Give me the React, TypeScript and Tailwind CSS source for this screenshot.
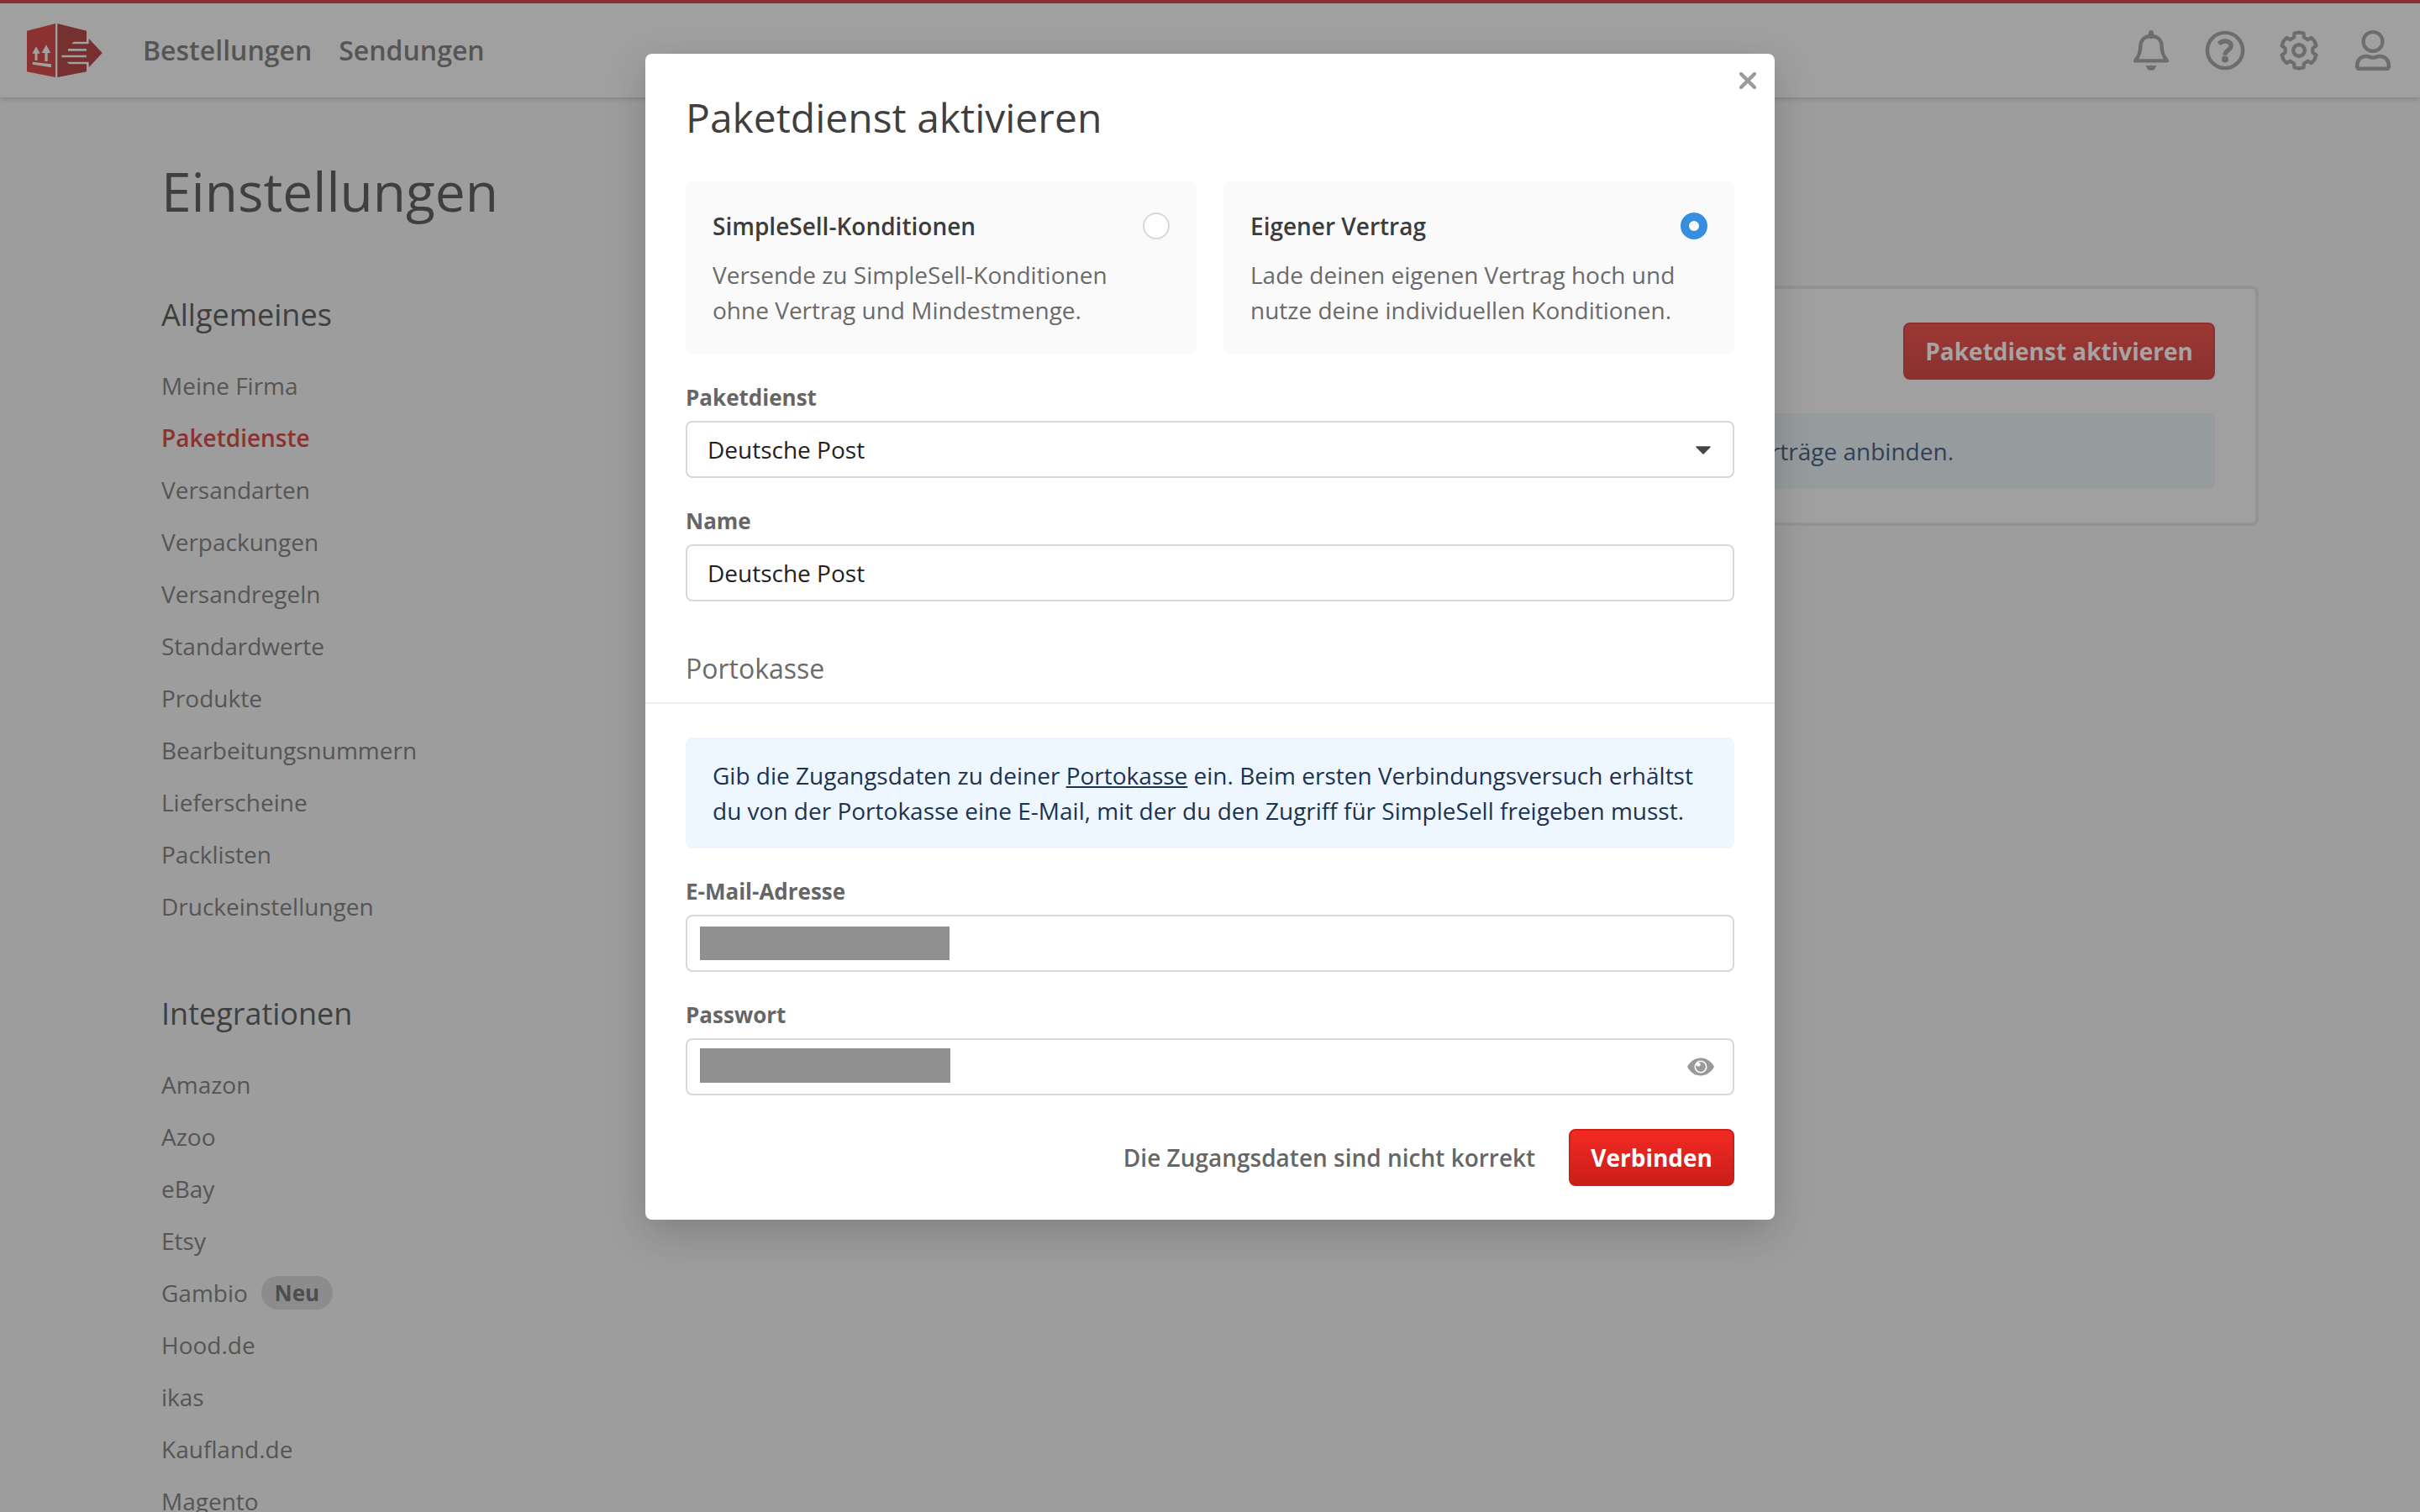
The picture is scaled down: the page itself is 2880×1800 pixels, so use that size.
import React, { useState } from "react";

const GENERAL_LINKS = [
  "Meine Firma",
  "Paketdienste",
  "Versandarten",
  "Verpackungen",
  "Versandregeln",
  "Standardwerte",
  "Produkte",
  "Bearbeitungsnummern",
  "Lieferscheine",
  "Packlisten",
  "Druckeinstellungen",
];

const INTEGRATION_LINKS = [
  "Amazon",
  "Azoo",
  "eBay",
  "Etsy",
  "Gambio",
  "Hood.de",
  "ikas",
  "Kaufland.de",
  "Magento",
];

const Logo = () => (
  <svg width="90" height="64" viewBox="0 0 90 64">
    <path d="M0 8.7 34 0V64L0 57.3Z" fill="#8b3131" />
    <path d="M36.3 0 71 8.7V57.3L36.3 64Z" fill="#76302f" />
    <path
      d="M55.7 21.7H71V24.3H53ZM49 30H71V32.7H49ZM41.3 37.7H71V40.3H41.3ZM47.3 45.7H71V48.3H50.3Z"
      fill="#a0a0a0"
    />
    <path d="M70.9 24.3H73.7V18L89.7 35 73.7 52.3V45.7H70.9Z" fill="#76302f" />
    <path
      d="M11 27.3 15.7 35.7H12.5V44H9.5V35.7H6.3ZM23 25.3 28.3 35H24.7V45H21.3V35H17.5ZM6.7 45.7 29 48.3V52.3L6.7 48.7Z"
      fill="#a0a0a0"
    />
  </svg>
);

const BellIcon = () => (
  <svg width="48" height="48" viewBox="0 0 48 48" fill="none">
    <path
      d="M5 36.4C9 31.5 11.3 26.5 11.3 19.5C11.3 11.8 16.3 7 24 7S36.7 11.8 36.7 19.5C36.7 26.5 39 31.5 43 36.4Z"
      stroke="#6d6d6d"
      strokeWidth="4.4"
      strokeLinejoin="round"
    />
    <path d="M24 3V7" stroke="#6d6d6d" strokeWidth="6" strokeLinecap="round" />
    <path d="M18 42H30A6 6 0 0 1 18 42Z" fill="#6d6d6d" />
  </svg>
);

const HelpIcon = () => (
  <svg width="48" height="48" viewBox="0 0 48 48" fill="none">
    <circle cx="24" cy="24" r="21.1" stroke="#6d6d6d" strokeWidth="4.4" />
    <path
      d="M16.8 16.2C18.8 14 21 13 24 13C28 13 31.2 15 31.2 18.6C31.2 23.6 24 23.2 24 29.8"
      stroke="#6d6d6d"
      strokeWidth="5.4"
    />
    <circle cx="24" cy="34.4" r="4" fill="#6d6d6d" />
  </svg>
);

// outline of the gear: five points for each of the six teeth
const gearPoints = [0, 60, 120, 180, 240, 300]
  .flatMap((tooth) =>
    [
      [-21, 16.6],
      [-15, 21.2],
      [0, 21.4],
      [15, 21.2],
      [21, 16.6],
    ].map(([offset, radius]) => {
      const angle = ((tooth + offset) * Math.PI) / 180;
      return `${24 + radius * Math.sin(angle)},${24 - radius * Math.cos(angle)}`;
    })
  )
  .join(" ");

const GearIcon = () => (
  <svg width="48" height="48" viewBox="0 0 48 48" fill="none">
    <polygon
      points={gearPoints}
      stroke="#6d6d6d"
      strokeWidth="4.2"
      strokeLinejoin="round"
    />
    <circle cx="24" cy="24" r="6.8" stroke="#6d6d6d" strokeWidth="4.4" />
  </svg>
);

const UserIcon = () => (
  <svg width="48" height="48" viewBox="0 0 48 48" fill="none">
    <circle cx="24" cy="13.4" r="11.4" stroke="#6d6d6d" strokeWidth="4.2" />
    <path
      d="M5.2 42C5.2 35.4 9.6 31 16 31C19.2 31 21 32.6 24 32.6S28.8 31 32 31C38.4 31 42.8 35.4 42.8 42V43.8A2 2 0 0 1 40.8 45.8H7.2A2 2 0 0 1 5.2 43.8Z"
      stroke="#6d6d6d"
      strokeWidth="4.4"
    />
  </svg>
);

const EyeIcon = () => (
  <svg width="32" height="22" viewBox="0 0 32 22">
    <path
      d="M0 11C3.5 4.5 9.3 .5 16 .5S28.5 4.5 32 11C28.5 17.5 22.7 21.5 16 21.5S3.5 17.5 0 11Z"
      fill="#999"
    />
    <circle cx="16" cy="11" r="6.7" fill="#999" stroke="#fff" strokeWidth="1.6" />
    <circle cx="13.3" cy="8.3" r="2.4" fill="#fff" />
  </svg>
);

interface NavSectionProps {
  title: string;
  links: string[];
}

const NavSection: React.FC<NavSectionProps> = ({ title, links }) => (
  <section>
    <h2 className="text-[36px] leading-[45px] text-[#3f3f3f] mb-[41px]">
      {title}
    </h2>
    <ul className="flex flex-col gap-5">
      {links.map((link) => (
        <li
          key={link}
          className={
            link === "Paketdienste"
              ? "font-semibold text-[#8d3130]"
              : "flex items-center gap-4 text-[#555]"
          }
        >
          {link}
          {link === "Gambio" && (
            <span className="h-10 w-[85px] rounded-full bg-[#8c8c8c] text-center text-[26px] leading-10 font-bold text-[#4e4e4e]">
              Neu
            </span>
          )}
        </li>
      ))}
    </ul>
  </section>
);

interface ContractOptionProps {
  title: string;
  lines: string[];
  checked: boolean;
  onSelect: () => void;
}

const ContractOption: React.FC<ContractOptionProps> = ({
  title,
  lines,
  checked,
  onSelect,
}) => (
  <div onClick={onSelect} className="flex-1 rounded-lg bg-[#fafafa] p-8">
    <div className="flex items-center justify-between">
      <span className="font-semibold text-[#3c3c3c]">{title}</span>
      {checked ? (
        <span className="size-8 rounded-full border-10 border-[#358fdd] bg-white" />
      ) : (
        <span className="size-8 rounded-full border-2 border-[#d8d8d8] bg-white" />
      )}
    </div>
    <p className="mt-4 text-[#6a6a6a]">
      {lines.map((line) => (
        <span key={line} className="block whitespace-nowrap">
          {line}
        </span>
      ))}
    </p>
  </div>
);

interface FieldProps {
  label: string;
  children?: React.ReactNode;
}

const Field: React.FC<FieldProps> = ({ label, children }) => (
  <div className="mt-8">
    <div className="mb-2 text-[26px] leading-[39px] font-bold text-[#666]">
      {label}
    </div>
    <div className="flex h-[68px] items-center rounded-lg border-2 border-[#d8d8d8] bg-white text-[#222]">
      {children}
    </div>
  </div>
);

const App: React.FC = () => {
  const [ownContract, setOwnContract] = useState(true);

  return (
    <div className="relative h-[1800px] w-[2880px] overflow-hidden bg-[#9d9d9d] font-['Open_Sans',sans-serif] text-[28px] leading-[42px]">
      <header className="flex h-[116px] items-center border-t-4 border-[#8b3032] bg-[#a0a0a0] px-8 shadow-[0_2px_6px_rgba(0,0,0,0.16)]">
        <Logo />
        <nav className="ml-12 flex gap-8 text-[32px] leading-[48px] font-semibold text-[#555]">
          <span>Bestellungen</span>
          <span>Sendungen</span>
        </nav>
        <div className="ml-auto flex gap-10">
          <BellIcon />
          <HelpIcon />
          <GearIcon />
          <UserIcon />
        </div>
      </header>

      <main className="mx-[192px] flex">
        <aside className="w-[640px] pt-[73px]">
          <h1 className="text-[64px] leading-[77px] text-[#3f3f3f]">
            Einstellungen
          </h1>
          <div className="mt-[86px] flex flex-col gap-[84px]">
            <NavSection title="Allgemeines" links={GENERAL_LINKS} />
            <NavSection title="Integrationen" links={INTEGRATION_LINKS} />
          </div>
        </aside>

        <div className="mt-[224px] flex h-[286px] flex-1 flex-col gap-10 rounded-lg border-4 border-[#939393] bg-[#a0a0a0] px-12 py-10">
          <button className="h-[68px] self-end rounded-lg border-2 border-[#8c2f2f] bg-linear-to-b from-[#9d3834] to-[#8a312e] px-6 font-bold text-[#a5a3a3]">
            Paketdienst aktivieren
          </button>
          <div className="rounded-lg bg-[#969b9e] py-6 pr-[311px] text-right text-[#2f4156]">
            Verträge anbinden.
          </div>
        </div>
      </main>

      {/* Dialog */}
      <div className="absolute top-[64px] left-[768px] h-[1388px] w-[1344px] rounded-lg bg-white px-12 shadow-[0_16px_48px_rgba(0,0,0,0.18)]">
        <button className="absolute top-[22px] right-[22px] size-5">
          <svg width="20" height="20" viewBox="0 0 20 20">
            <path
              d="M2 2 18 18M18 2 2 18"
              stroke="#9b9b9b"
              strokeWidth="4.4"
              strokeLinecap="round"
            />
          </svg>
        </button>

        <h2 className="pt-[46px] text-[48px] leading-[60px] text-[#3f3f3f]">
          Paketdienst aktivieren
        </h2>

        <div className="mt-[46px] flex gap-8">
          <ContractOption
            title="SimpleSell-Konditionen"
            lines={[
              "Versende zu SimpleSell-Konditionen",
              "ohne Vertrag und Mindestmenge.",
            ]}
            checked={!ownContract}
            onSelect={() => setOwnContract(false)}
          />
          <ContractOption
            title="Eigener Vertrag"
            lines={[
              "Lade deinen eigenen Vertrag hoch und",
              "nutze deine individuellen Konditionen.",
            ]}
            checked={ownContract}
            onSelect={() => setOwnContract(true)}
          />
        </div>

        <Field label="Paketdienst">
          <span className="pl-6">Deutsche Post</span>
          <svg
            className="mt-0.5 mr-[26px] ml-auto"
            width="18"
            height="10"
            viewBox="0 0 18 10"
          >
            <path
              d="M1 1H17L9 9Z"
              fill="#444"
              stroke="#444"
              strokeWidth="1.5"
              strokeLinejoin="round"
            />
          </svg>
        </Field>
        <Field label="Name">
          <span className="pl-6">Deutsche Post</span>
        </Field>

        <h3 className="-mx-12 mt-14 border-b-2 border-[#eee] px-12 pb-4 text-[32px] leading-[48px] text-[#6b6b6b]">
          Portokasse
        </h3>

        <div className="mt-10 rounded-lg bg-[#eef7ff] px-8 py-6 whitespace-nowrap text-[#1c3350]">
          Gib die Zugangsdaten zu deiner{" "}
          <span className="underline">Portokasse</span> ein. Beim ersten
          Verbindungsversuch erhältst
          <br />
          du von der Portokasse eine E-Mail, mit der du den Zugriff für
          SimpleSell freigeben musst.
        </div>

        <Field label="E-Mail-Adresse">
          <span className="ml-[15px] h-10 w-[297px] bg-[#909090]" />
        </Field>
        <Field label="Passwort">
          <span className="mb-[3px] ml-[15px] h-[41px] w-[298px] bg-[#909090]" />
          <span className="mr-[22px] ml-auto">
            <EyeIcon />
          </span>
        </Field>

        <div className="mt-10 flex items-center justify-end gap-10">
          <span className="font-semibold text-[#666]">
            Die Zugangsdaten sind nicht korrekt
          </span>
          <button className="h-[68px] rounded-lg border-2 border-[#cb1f1a] bg-linear-to-b from-[#f32a23] to-[#c91e19] px-6 font-bold text-white">
            Verbinden
          </button>
        </div>
      </div>
    </div>
  );
};

export default App;
